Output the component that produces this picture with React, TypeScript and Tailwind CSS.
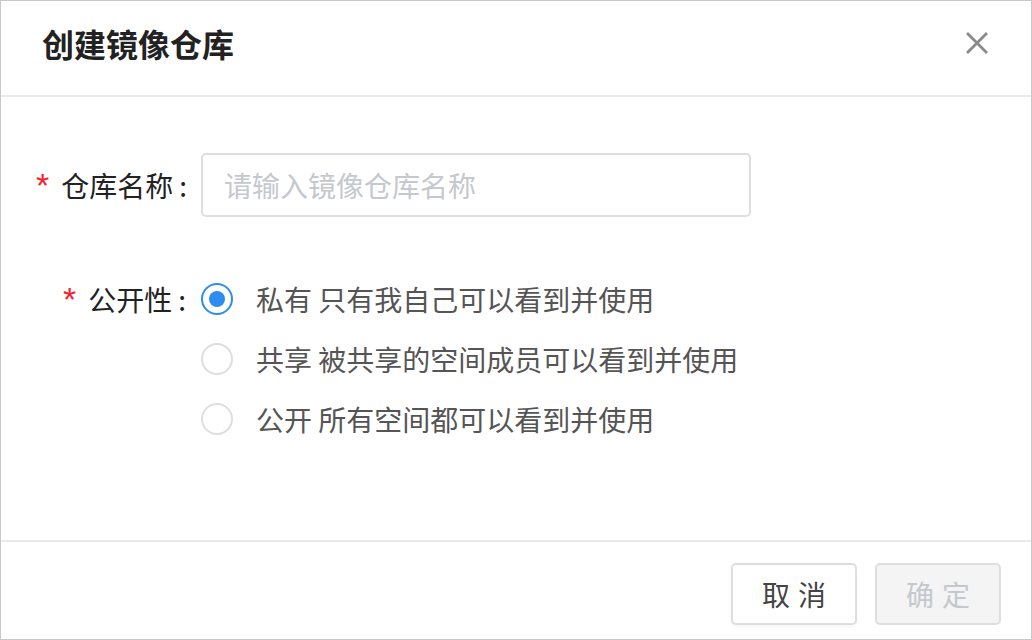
import { useState } from "react";

const FONT = { fontFamily: '"Noto Sans CJK SC", "Noto Sans", sans-serif' };

const OPTIONS = [
  { value: "private", title: "私有", desc: "只有我自己可以看到并使用" },
  { value: "shared", title: "共享", desc: "被共享的空间成员可以看到并使用" },
  { value: "public", title: "公开", desc: "所有空间都可以看到并使用" },
];

function Radio({ checked }: { checked: boolean }) {
  return (
    <span
      className={
        "flex h-8 w-8 shrink-0 items-center justify-center rounded-full border-2 bg-white " +
        (checked ? "border-[#2d8cf0]" : "border-[#dcdee2]")
      }
    >
      {checked && <span className="h-4 w-4 rounded-full bg-[#2d8cf0]" />}
    </span>
  );
}

function Label({ text }: { text: string }) {
  return (
    <>
      <span className="mr-[12px] font-['Liberation_Sans'] text-[34px] leading-none text-[#f5222d]">*</span>
      {text}
      <span className="ml-[6px]">:</span>
    </>
  );
}

export default function App() {
  const [name, setName] = useState("");
  const [access, setAccess] = useState("private");

  return (
    <div
      className="flex h-[640px] w-[1032px] flex-col border border-[#c8c8c8] bg-white text-[#333]"
      style={FONT}
    >
      {/* header */}
      <div className="flex h-[96px] shrink-0 items-center justify-between border-b-2 border-[#e8eaec] pb-[10px] pl-[41px] pr-[42px]">
        <h2 className="text-[32px] font-bold leading-none text-[#222]">创建镜像仓库</h2>
        <button className="text-[#8a8a8a]" aria-label="关闭">
          <svg width="24" height="24" viewBox="0 0 24 24" fill="none" stroke="currentColor" strokeWidth="2.8">
            <path d="M2 2 L22 22 M22 2 L2 22" />
          </svg>
        </button>
      </div>

      {/* body */}
      <div className="flex flex-1 flex-col pt-[56px]">
        <div className="flex items-center">
          <label className="flex w-[200px] shrink-0 items-center justify-end pr-[14px] text-[28px] text-[#222]">
            <Label text="仓库名称" />
          </label>
          <input
            value={name}
            onChange={(e) => setName(e.target.value)}
            placeholder="请输入镜像仓库名称"
            className="h-[64px] w-[550px] rounded-[5px] border-2 border-[#dcdee2] px-[21px] text-[28px] text-[#333] outline-none placeholder:text-[#c5c8ce]"
          />
        </div>

        <div className="mt-[66px] flex">
          <label className="flex h-[32px] w-[200px] shrink-0 items-center justify-end pr-[15px] text-[28px] text-[#222]">
            <Label text="公开性" />
          </label>
          <div className="flex flex-col gap-[28px]">
            {OPTIONS.map((o) => (
              <button
                key={o.value}
                onClick={() => setAccess(o.value)}
                className="flex h-[32px] items-center gap-[23px] text-left text-[28px] text-[#555]"
              >
                <Radio checked={access === o.value} />
                <span>
                  {o.title} {o.desc}
                </span>
              </button>
            ))}
          </div>
        </div>
      </div>

      {/* footer */}
      <div className="flex h-[99px] shrink-0 justify-end gap-[18px] border-t-2 border-[#e8eaec] pr-[30px] pt-[21px]">
        <button className="h-[62px] w-[126px] rounded-[5px] border-2 border-[#dcdee2] bg-white text-[28px] tracking-[8px] text-[#444] shadow-[0_2px_3px_rgba(0,0,0,0.04)]">
          <span className="pl-[8px]">取消</span>
        </button>
        <button
          disabled
          className="h-[62px] w-[126px] rounded-[5px] border-2 border-[#dcdee2] bg-[#f4f4f4] text-[28px] tracking-[8px] text-[#c5c8ce]"
        >
          <span className="pl-[8px]">确定</span>
        </button>
      </div>
    </div>
  );
}
